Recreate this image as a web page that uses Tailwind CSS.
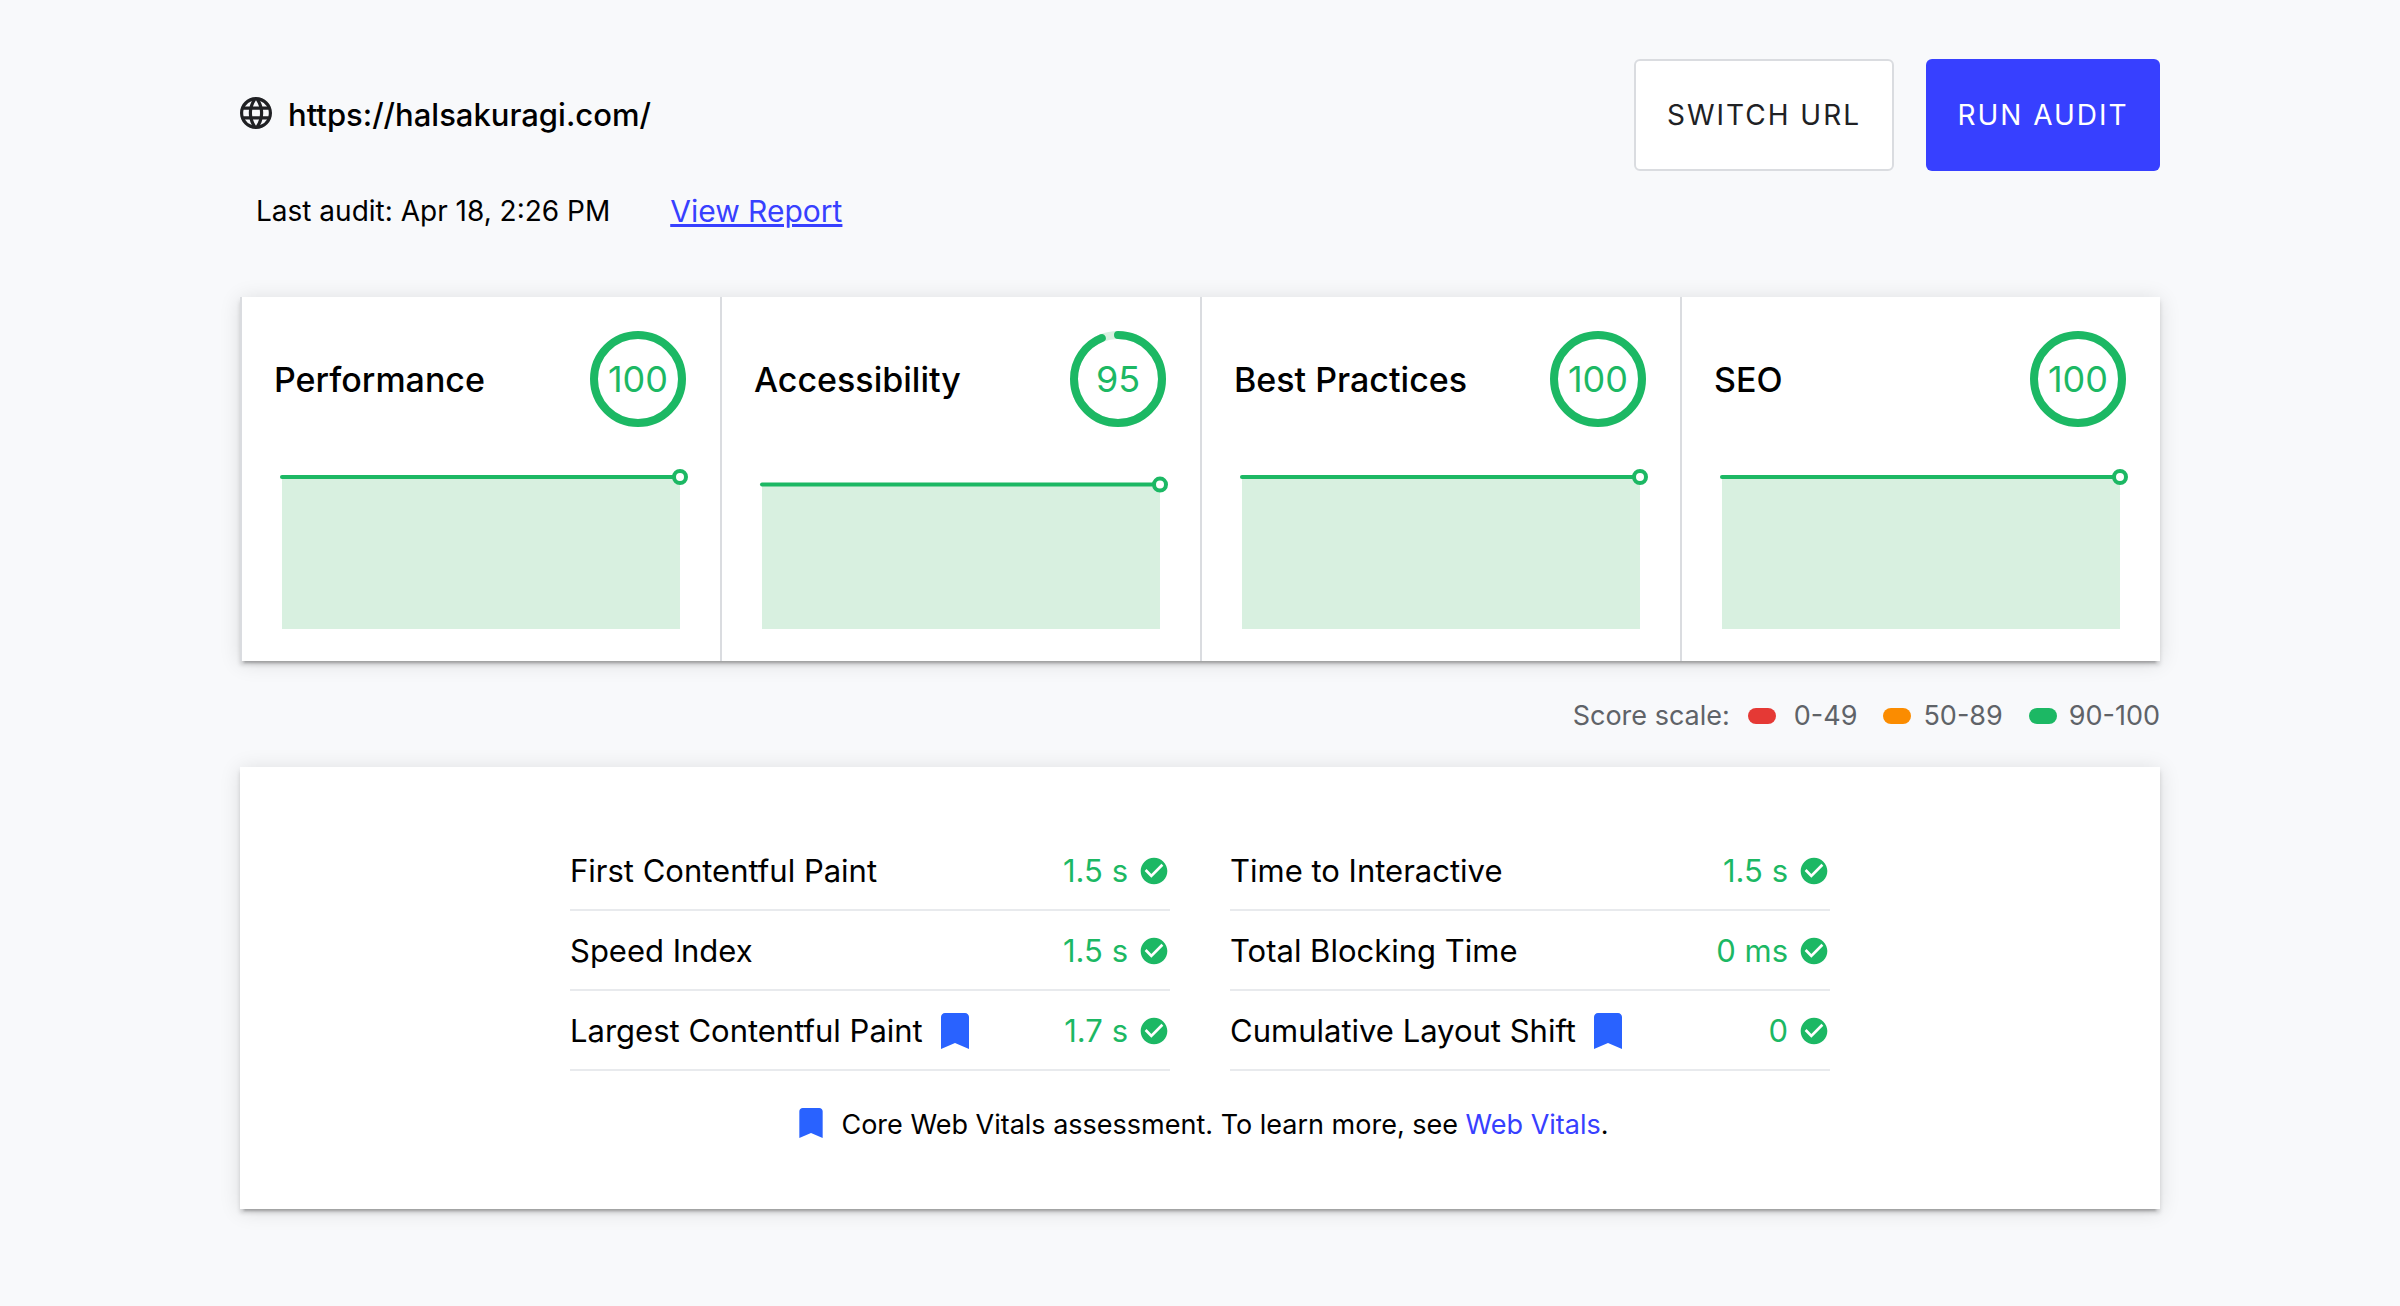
<!DOCTYPE html>
<html lang="en">
<head>
<meta charset="utf-8">
<meta name="viewport" content="width=device-width, initial-scale=1">
<title>Site audit</title>
<script src="https://cdn.jsdelivr.net/npm/@tailwindcss/browser@4"></script>
</head>
<body class="min-h-screen bg-[#f8f9fb] font-['Inter',sans-serif] text-black">
<svg class="hidden" aria-hidden="true">
  <symbol id="check" viewBox="0 0 24 24"><path fill="currentColor" d="M12 2C6.480 2 2 6.480 2 12s4.480 10 10 10 10-4.480 10-10S17.520 2 12 2zm-2 15l-5-5 1.410-1.410L10 14.170l7.590-7.590L19 8l-9 9z"/></symbol>
  <symbol id="bookmark" viewBox="0 0 24 24"><path fill="currentColor" d="M17 3H7c-1.100 0-2 .9-2 2v16l7-3 7 3V5c0-1.100-.9-2-2-2z"/></symbol>
</svg>
<main class="px-[10%] pt-[59px] pb-20">
  <header>
    <div class="flex h-28 items-center justify-between">
      <h1 class="flex items-center gap-4 text-[31px] leading-10 font-medium">
        <svg class="mb-1 size-8 text-[#202124]" viewBox="2 2 20 20" aria-hidden="true"><path fill="currentColor" d="M11.990 2C6.470 2 2 6.480 2 12s4.470 10 9.990 10C17.520 22 22 17.520 22 12S17.520 2 11.990 2zm6.930 6h-2.950a15.650 15.650 0 0 0-1.380-3.560A8.030 8.030 0 0 1 18.920 8zM12 4.040c.83 1.200 1.480 2.530 1.910 3.960h-3.820c.43-1.430 1.080-2.760 1.910-3.960zM4.260 14C4.100 13.360 4 12.690 4 12s.1-1.360.26-2h3.380c-.08.66-.14 1.320-.14 2s.06 1.340.14 2H4.260zm.82 2h2.950c.32 1.250.78 2.450 1.380 3.560A7.987 7.987 0 0 1 5.080 16zm2.950-8H5.080a7.987 7.987 0 0 1 4.330-3.560A15.650 15.650 0 0 0 8.030 8zM12 19.960c-.83-1.200-1.480-2.530-1.910-3.960h3.820c-.43 1.430-1.080 2.760-1.910 3.960zM14.340 14H9.660c-.09-.66-.16-1.320-.16-2s.07-1.350.16-2h4.680c.09.65.16 1.320.16 2s-.07 1.340-.16 2zm.25 5.560c.6-1.110 1.060-2.310 1.380-3.560h2.950a8.030 8.030 0 0 1-4.330 3.560zM16.360 14c.08-.66.14-1.320.14-2s-.06-1.340-.14-2h3.380c.16.640.26 1.310.26 2s-.1 1.360-.26 2h-3.380z"/></svg>
        https://halsakuragi.com/
      </h1>
      <div class="flex gap-8 text-[28px] tracking-[2px]">
        <button type="button" class="h-28 w-[260px] rounded-md border-2 border-[#dadce0] bg-white text-[#202124]">SWITCH URL</button>
        <button type="button" class="h-28 w-[234px] rounded-md bg-[#3740ff] text-white">RUN AUDIT</button>
      </div>
    </div>
    <div class="mt-4 flex h-12 items-center gap-15 pl-4">
      <p class="text-[28px]">Last audit: Apr 18, 2:26 PM</p>
      <a href="#report" class="text-[30px] text-[#3740ff] underline">View Report</a>
    </div>
  </header>

  <section aria-label="Scores" class="mt-[62px] grid grid-cols-4 bg-white shadow-[0_6px_2px_-4px_rgba(0,0,0,0.2),0_4px_4px_0_rgba(0,0,0,0.14),0_2px_20px_0_rgba(0,0,0,0.12)]">
    <article class="border-l-2 border-[#dadce0] p-8">
      <div class="flex items-center justify-between">
        <h2 class="text-[34px] font-medium">Performance</h2>
        <div class="relative size-[100px] text-[#1cb864]">
          <svg class="size-full" viewBox="0 0 100 100" fill="none" aria-hidden="true"><circle cx="50" cy="50" r="44" stroke="currentColor" stroke-width="8"/></svg>
          <span class="absolute inset-0 flex items-center justify-center text-[36px]">100</span>
        </div>
      </div>
      <svg class="mt-12 mr-2 ml-2 block h-38 w-[calc(100%-16px)] overflow-visible" aria-hidden="true"><rect width="100%" height="152" fill="#d8f0e0"/><line x1="0" x2="100%" stroke="#1cb864" stroke-width="4" stroke-linecap="round"/><circle cx="100%" r="6" fill="#fff" stroke="#1cb864" stroke-width="4"/></svg>
    </article>
    <article class="border-l-2 border-[#dadce0] p-8">
      <div class="flex items-center justify-between">
        <h2 class="text-[34px] font-medium">Accessibility</h2>
        <div class="relative size-[100px] text-[#1cb864]">
          <svg class="size-full -rotate-90" viewBox="0 0 100 100" fill="none" aria-hidden="true"><circle cx="50" cy="50" r="44" stroke="#d8f0e0" stroke-width="8"/><circle cx="50" cy="50" r="44" stroke="currentColor" stroke-width="8" stroke-linecap="round" pathLength="100" stroke-dasharray="94 6"/></svg>
          <span class="absolute inset-0 flex items-center justify-center text-[36px]">95</span>
        </div>
      </div>
      <svg class="mt-12 mr-2 ml-2 block h-38 w-[calc(100%-16px)] overflow-visible" aria-hidden="true"><rect y="7.600" width="100%" height="144.400" fill="#d8f0e0"/><line x1="0" x2="100%" y1="7.600" y2="7.600" stroke="#1cb864" stroke-width="4" stroke-linecap="round"/><circle cx="100%" cy="7.600" r="6" fill="#fff" stroke="#1cb864" stroke-width="4"/></svg>
    </article>
    <article class="border-l-2 border-[#dadce0] p-8">
      <div class="flex items-center justify-between">
        <h2 class="text-[34px] font-medium">Best Practices</h2>
        <div class="relative size-[100px] text-[#1cb864]">
          <svg class="size-full" viewBox="0 0 100 100" fill="none" aria-hidden="true"><circle cx="50" cy="50" r="44" stroke="currentColor" stroke-width="8"/></svg>
          <span class="absolute inset-0 flex items-center justify-center text-[36px]">100</span>
        </div>
      </div>
      <svg class="mt-12 mr-2 ml-2 block h-38 w-[calc(100%-16px)] overflow-visible" aria-hidden="true"><rect width="100%" height="152" fill="#d8f0e0"/><line x1="0" x2="100%" stroke="#1cb864" stroke-width="4" stroke-linecap="round"/><circle cx="100%" r="6" fill="#fff" stroke="#1cb864" stroke-width="4"/></svg>
    </article>
    <article class="border-l-2 border-[#dadce0] p-8">
      <div class="flex items-center justify-between">
        <h2 class="text-[34px] font-medium">SEO</h2>
        <div class="relative size-[100px] text-[#1cb864]">
          <svg class="size-full" viewBox="0 0 100 100" fill="none" aria-hidden="true"><circle cx="50" cy="50" r="44" stroke="currentColor" stroke-width="8"/></svg>
          <span class="absolute inset-0 flex items-center justify-center text-[36px]">100</span>
        </div>
      </div>
      <svg class="mt-12 mr-2 ml-2 block h-38 w-[calc(100%-16px)] overflow-visible" aria-hidden="true"><rect width="100%" height="152" fill="#d8f0e0"/><line x1="0" x2="100%" stroke="#1cb864" stroke-width="4" stroke-linecap="round"/><circle cx="100%" r="6" fill="#fff" stroke="#1cb864" stroke-width="4"/></svg>
    </article>
  </section>

  <div class="flex h-[106px] items-center justify-end gap-[26px] pt-1 text-[27px] text-[#5f6368]">
    <div class="flex items-center gap-[18px]"><span>Score scale:</span><span class="h-4 w-7 rounded-full bg-[#e53935]"></span><span>0-49</span></div>
    <div class="flex items-center gap-3"><span class="h-4 w-7 rounded-full bg-[#fb8c00]"></span><span>50-89</span></div>
    <div class="flex items-center gap-3"><span class="h-4 w-7 rounded-full bg-[#1cb864]"></span><span>90-100</span></div>
  </div>

  <section aria-label="Metrics" class="bg-white pt-16 pb-[66px] shadow-[0_6px_2px_-4px_rgba(0,0,0,0.2),0_4px_4px_0_rgba(0,0,0,0.14),0_2px_20px_0_rgba(0,0,0,0.12)]">
    <dl class="mx-auto grid max-w-[1260px] grid-cols-2 gap-x-15 text-[31px]">
      <div class="flex h-20 items-center justify-between border-b-2 border-[#e8eaed] pt-0.5"><dt>First Contentful Paint</dt><dd class="flex items-center gap-2.5 text-[#1cb864]">1.5 s<svg class="size-8"><use href="#check"/></svg></dd></div>
      <div class="flex h-20 items-center justify-between border-b-2 border-[#e8eaed] pt-0.5"><dt>Time to Interactive</dt><dd class="flex items-center gap-2.5 text-[#1cb864]">1.5 s<svg class="size-8"><use href="#check"/></svg></dd></div>
      <div class="flex h-20 items-center justify-between border-b-2 border-[#e8eaed] pt-0.5"><dt>Speed Index</dt><dd class="flex items-center gap-2.5 text-[#1cb864]">1.5 s<svg class="size-8"><use href="#check"/></svg></dd></div>
      <div class="flex h-20 items-center justify-between border-b-2 border-[#e8eaed] pt-0.5"><dt>Total Blocking Time</dt><dd class="flex items-center gap-2.5 text-[#1cb864]">0 ms<svg class="size-8"><use href="#check"/></svg></dd></div>
      <div class="flex h-20 items-center justify-between border-b-2 border-[#e8eaed] pt-0.5"><dt class="flex items-center gap-2">Largest Contentful Paint<svg class="size-12 text-[#2962ff]"><use href="#bookmark"/></svg></dt><dd class="flex items-center gap-2.5 text-[#1cb864]">1.7 s<svg class="size-8"><use href="#check"/></svg></dd></div>
      <div class="flex h-20 items-center justify-between border-b-2 border-[#e8eaed] pt-0.5"><dt class="flex items-center gap-2">Cumulative Layout Shift<svg class="size-12 text-[#2962ff]"><use href="#bookmark"/></svg></dt><dd class="flex items-center gap-2.5 text-[#1cb864]">0<svg class="size-8"><use href="#check"/></svg></dd></div>
    </dl>
    <div class="mt-8 flex h-10 items-center justify-center gap-2.5 text-[27px]">
      <svg class="size-10 text-[#2962ff]"><use href="#bookmark"/></svg>
      <p class="pt-1">Core Web Vitals assessment. To learn more, see <a href="#vitals" class="text-[#3740ff]">Web Vitals</a>.</p>
    </div>
  </section>
</main>
</body>
</html>
